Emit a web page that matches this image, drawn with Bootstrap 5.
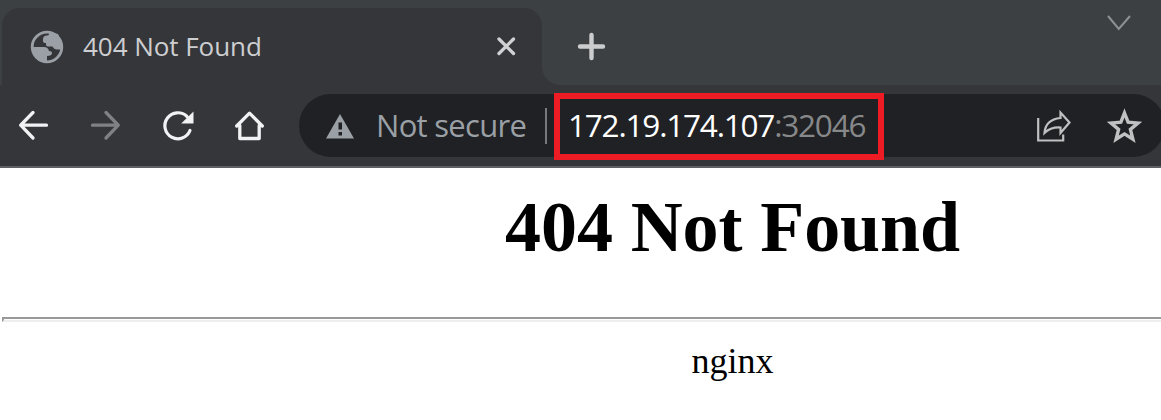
<!DOCTYPE html>
<html lang="en">
<head>
<meta charset="utf-8">
<meta name="viewport" content="width=device-width, initial-scale=1">
<title>404 Not Found</title>
<link href="https://cdn.jsdelivr.net/npm/bootstrap@5.3.0/dist/css/bootstrap.min.css" rel="stylesheet">
<script src="https://cdn.jsdelivr.net/npm/bootstrap@5.3.0/dist/js/bootstrap.bundle.min.js" defer></script>
<style>
  body { background: #fff; height: 420px; font-family: "Open Sans", "Noto Sans", sans-serif; }
  svg { display: block; flex: none; }
  .tab-strip { height: 85px; background: #3d4043; padding: 8px 0 0 2px; }
  .browser-tab { width: 540px; height: 77px; background: #35363a; border-radius: 18px 18px 0 0; padding-left: 28px; }
  .browser-tab::after { content: ""; position: absolute; bottom: 0; left: 100%; width: 18px; height: 18px; background: radial-gradient(circle at 100% 0, transparent 17.5px, #35363a 18px); }
  .tab-title { width: 412px; margin: -2px 0 0 19px; font-size: 26px; line-height: 36px; letter-spacing: -.05px; color: #cdced0; }
  .toolbar { height: 83px; background: #35363a; border-bottom: 2px solid #5f6064; padding: 9px 0 9px 16px; }
  .nav-icons { gap: 36px; width: 283px; flex: none; }
  .omnibox { width: 866px; height: 63px; flex: none; background: #202124; border-radius: 32px; padding-left: 26px; }
  .security { width: 151px; margin: -1px 0 0 21px; font-size: 31px; letter-spacing: -.7px; color: #9aa0a6; }
  .divider { width: 2px; height: 36px; margin-left: 18px; background: #77797c; flex: none; }
  .url-frame { width: 330px; height: 67px; margin: 1px 0 0 7px; padding: 0 0 3px 8px; border: 6px solid #ed1c24; flex: none; font-size: 31.5px; letter-spacing: -1.2px; color: #fff; }
  .port { color: #87888a; }
  .page { padding: 18px 0 0 2px; }
  .centered { padding-left: 302px; }
  .page-title { font: bold 72px/82px "Liberation Serif", serif; letter-spacing: -.1px; color: #000; }
  .rule { height: 5px; border: 2px solid #999; border-right: 0; border-bottom-color: #eee; margin-top: 49px; }
  .server { font: 36px/42px "Liberation Serif", serif; color: #000; margin-top: 18px; }
</style>
</head>
<body class="overflow-hidden">
<header>
  <div class="tab-strip d-flex">
    <div class="browser-tab position-relative d-flex align-items-center">
      <svg width="34" height="34" viewBox="0 0 34 34"><circle cx="17" cy="17" r="14.800" fill="none" stroke="#9aa0a6" stroke-width="2.800"/><path d="M19 2v2q0 1.500-2 1.500-4 0-4 4v1.500q0 2 3 2v1.500q0 2 2 2h4.500q1.500 3 4.500 3h5V13l-4-9zM2 17h12q4 0 5 4 3 0 3 2 0 3-5 3v6h-5L4 26z" fill="#9aa0a6"/></svg>
      <div class="tab-title text-nowrap">404 Not Found</div>
      <svg width="24" height="24" viewBox="0 0 24 24" fill="none" stroke="#d0d1d3" stroke-width="3.300" stroke-linecap="round"><path d="m4 4 14.500 14.500m0-14.500L4 18.500"/></svg>
    </div>
    <svg style="margin:23px 0 0 35px" width="30" height="30" viewBox="0 0 30 30" fill="none" stroke="#cbcccd" stroke-width="4.400" stroke-linecap="round"><path d="M14.500 4v23M3 15.500h23"/></svg>
    <svg class="ms-auto me-4" width="36" height="30" viewBox="0 0 36 30" fill="none" stroke="#8e9092" stroke-width="2"><path d="m7 8 10.800 13L29 8"/></svg>
  </div>
  <div class="toolbar d-flex align-items-center overflow-hidden">
    <div class="nav-icons d-flex" role="navigation">
      <svg width="36" height="36" viewBox="0 0 36 36" fill="none" stroke="#f1f2f4" stroke-width="3.300" stroke-linecap="round" stroke-linejoin="round"><path d="M30.500 17.200H4.700M17 4.500 4.700 17.200 17 30"/></svg>
      <svg width="36" height="36" viewBox="0 0 36 36" fill="none" stroke="#808184" stroke-width="3.300" stroke-linecap="round" stroke-linejoin="round"><path d="M4.500 17.200H30M18 4.500l12.300 12.700L18 30"/></svg>
      <svg width="36" height="36" viewBox="0 0 36 36" fill="none" stroke="#f1f2f4" stroke-width="3.200" stroke-linecap="round"><path d="M27 8.500A13 13 0 1 0 30 22.500"/><path d="M33.500 3.500v12H21.200z" fill="#f1f2f4" stroke="none"/></svg>
      <svg width="36" height="36" viewBox="0 0 36 36" fill="none" stroke="#f1f2f4" stroke-width="3.300" stroke-linecap="round" stroke-linejoin="round"><path d="M4.700 18 17.500 5.200 30.300 18M7.800 17.500v13h19.400v-13"/></svg>
    </div>
    <div class="omnibox d-flex align-items-center">
      <svg width="30" height="28" viewBox="0 0 30 28"><path d="M15 2 29 26.500H1z" fill="#9aa0a6"/><path d="M13.500 10.500h3.500v7h-3.500zm0 9.500h3.500v3.500h-3.500z" fill="#202124"/></svg>
      <span class="security text-nowrap">Not secure</span>
      <span class="divider"></span>
      <div class="url-frame d-flex align-items-center text-nowrap"><span>172.19.174.107</span><span class="port">:32046</span></div>
      <svg style="margin-left:150px" width="40" height="38" viewBox="0 0 40 38" fill="none" stroke="#bfc0c1" stroke-width="2.200"><path d="M4.200 11v22.500h25v-6"/><path d="M10.500 26q1-13.500 16-15V5.500L35.500 15.500 26.500 26v-5.500q-10-.5-16 5.500z"/></svg>
      <svg style="margin-left:32px" width="38" height="38" viewBox="0 0 38 38" fill="none" stroke="#c0c1c2" stroke-width="3.400"><path d="m18.500 6 3.600 9.200 9.900.8-7.600 6.400 2.500 9.800-8.400-5.300-8.400 5.300 2.500-9.800L5 16l9.900-.8z"/></svg>
    </div>
  </div>
</header>
<main class="page text-center">
  <h1 class="page-title centered mb-0">404 Not Found</h1>
  <div class="rule"></div>
  <div class="server centered">nginx</div>
</main>
</body>
</html>
